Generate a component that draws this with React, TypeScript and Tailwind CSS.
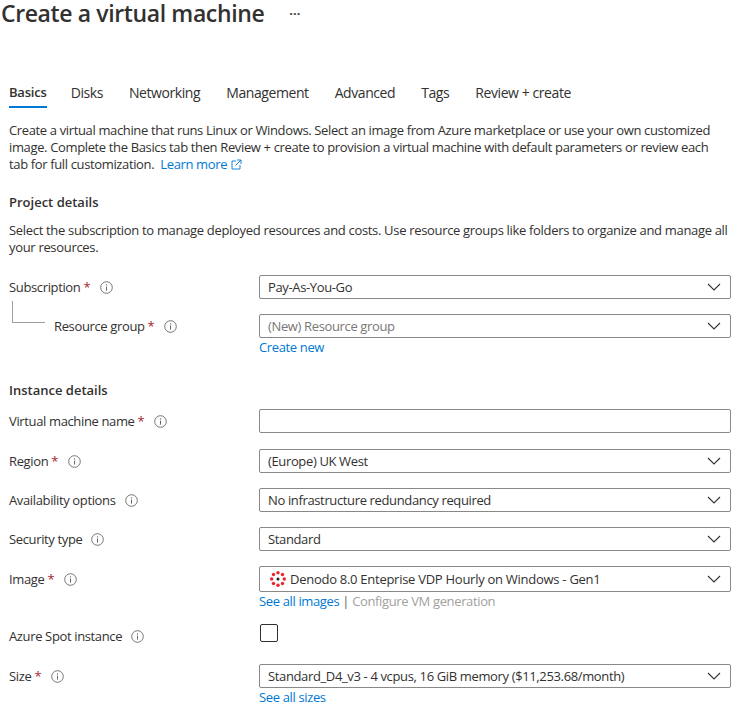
import React from "react";

const Info = () => (
  <svg width="13" height="13" viewBox="0 0 13 13" className="shrink-0" fill="none">
    <circle cx="6.5" cy="6.5" r="5.8" stroke="#666" strokeWidth="0.9" />
    <circle cx="6.5" cy="3.9" r="0.7" fill="#666" />
    <path d="M6.5 5.6V9.6" stroke="#666" strokeWidth="1" />
  </svg>
);

const Chevron = () => (
  <svg width="14" height="8" viewBox="0 0 14 8" fill="none" className="shrink-0">
    <path d="M1 1L7 7L13 1" stroke="#333" strokeWidth="1.1" />
  </svg>
);

const Star = () => <span className="text-[#a4262c] ml-[3px]">*</span>;

const Label = ({ text, req }: { text: string; req?: boolean }) => (
  <div className="flex items-center">
    <span>{text}</span>
    {req && <Star />}
    <span className={req ? "ml-[10px]" : "ml-[9px]"}><Info /></span>
  </div>
);

const Select = ({ children, dim, h = "h-[24px]" }: { children: React.ReactNode; dim?: boolean; h?: string }) => (
  <div className={`w-[472px] ${h} flex items-center justify-between pl-[8px] pr-[9px] bg-white border border-[#8a8886] rounded-[2px] ${dim ? "text-[#777]" : ""}`}>
    <div className="flex items-center">{children}</div>
    <Chevron />
  </div>
);

const Row = ({ label, children, mt, top }: { label: React.ReactNode; children: React.ReactNode; mt: string; top?: boolean }) => (
  <div className={`flex ${top ? "items-start" : "items-center"} ${mt}`}>
    <div className={`w-[250px] shrink-0 ${top ? "pt-[4px]" : ""}`}>{label}</div>
    {children}
  </div>
);

const Sub = ({ children }: { children: React.ReactNode }) => (
  <div className="ml-[250px] mt-[1px] h-[17px] leading-[17px] text-[#0078d4]">{children}</div>
);

const Denodo = () => (
  <svg width="16" height="16" viewBox="0 0 16 16" className="ml-[2px] mr-[4px] shrink-0">
    {[[8, 1.7], [3.5, 3.5], [12.5, 3.5], [1.7, 8], [14.3, 8], [3.5, 12.5], [12.5, 12.5], [8, 14.3]].map(([x, y], i) => (
      <circle key={i} cx={x} cy={y} r="1.7" fill="#e8242c" />
    ))}
    <circle cx="8" cy="8" r="1.5" fill="#222" />
  </svg>
);

const tabs = ["Disks", "Networking", "Management", "Advanced", "Tags", "Review + create"];

export default function App() {
  return (
    <div className="w-[740px] h-[707px] overflow-hidden bg-white text-[#323130] text-[13px] leading-[17px] tracking-[-0.36px]" style={{ fontFamily: '"Open Sans", "Noto Sans", sans-serif' }}>
      <div className="flex items-center h-[27px] pl-[1px]">
        <h1 className="text-[23px] leading-[27px] font-semibold tracking-[-0.38px]">Create a virtual machine</h1>
        <span className="ml-[25px] text-[#444] text-[13px] leading-[17px] font-bold tracking-[0px] -mt-[1px]">···</span>
      </div>

      <div className="pl-[9px]">
        <div className="flex items-start mt-[53px] h-[28px] gap-[26px] text-[14px] tracking-[-0.42px]">
          <div className="font-semibold text-[13px] tracking-[-0.2px] h-[28px] pt-[4px] border-b-[2px] border-[#0078d4] -mr-[2px]">Basics</div>
          {tabs.map((t) => (
            <div key={t} className="pt-[4px]">{t}</div>
          ))}
        </div>

        <p className="mt-[14px] w-[720px]">
          Create a virtual machine that runs Linux or Windows. Select an image from Azure marketplace or use your own customized image. Complete the Basics tab then Review + create to provision a virtual machine with default parameters or review each tab for full customization.{" "}
          <span className="text-[#0078d4] ml-[3px]">Learn more</span>
          <svg width="11" height="11" viewBox="0 0 11 11" fill="none" className="inline ml-[4px] -mt-[2px]">
            <path d="M5 2H1V10H9V6M6 1H10V5M10 1L4.5 6.5" stroke="#0078d4" strokeWidth="0.9" />
          </svg>
        </p>

        <h2 className="mt-[21px] font-semibold tracking-[0px]">Project details</h2>
        <p className="mt-[11px] w-[722px] tracking-[-0.32px]">
          Select the subscription to manage deployed resources and costs. Use resource groups like folders to organize and manage all your resources.
        </p>

        <Row mt="mt-[19px]" label={<Label text="Subscription" req />}>
          <Select>Pay-As-You-Go</Select>
        </Row>
        <div className="relative">
          <div className="absolute left-[3px] -top-[13px] w-[33px] h-[22px] border-l border-b border-[#a19f9d]" />
          <Row mt="mt-[15px]" label={<div className="pl-[45px]"><Label text="Resource group" req /></div>}>
            <Select dim>(New) Resource group</Select>
          </Row>
        </div>
        <Sub>Create new</Sub>

        <h2 className="mt-[26px] font-semibold tracking-[0px]">Instance details</h2>
        <Row mt="mt-[10px]" label={<Label text="Virtual machine name" req />}>
          <div className="w-[472px] h-[24px] bg-white border border-[#8a8886] rounded-[2px]" />
        </Row>
        <Row mt="mt-[16px]" label={<Label text="Region" req />}>
          <Select>(Europe) UK West</Select>
        </Row>
        <Row mt="mt-[15px]" label={<Label text="Availability options" />}>
          <Select>No infrastructure redundancy required</Select>
        </Row>
        <Row mt="mt-[15px]" label={<Label text="Security type" />}>
          <Select>Standard</Select>
        </Row>
        <Row mt="mt-[15px]" label={<Label text="Image" req />}>
          <Select h="h-[26px]"><Denodo /><span className="tracking-[-0.27px]">Denodo 8.0 Enteprise VDP Hourly on Windows - Gen1</span></Select>
        </Row>
        <Sub>
          See all images <span className="text-[#605e5c]">|</span> <span className="text-[#a19f9d]">Configure VM generation</span>
        </Sub>
        <Row top mt="mt-[14px]" label={<Label text="Azure Spot instance" />}>
          <div className="w-[18px] h-[18px] ml-[1px] border border-[#323130] rounded-[2px] bg-white" />
        </Row>
        <Row mt="mt-[19px]" label={<Label text="Size" req />}>
          <Select>Standard_D4_v3 - 4 vcpus, 16 GiB memory ($11,253.68/month)</Select>
        </Row>
        <Sub>See all sizes</Sub>
      </div>
    </div>
  );
}
